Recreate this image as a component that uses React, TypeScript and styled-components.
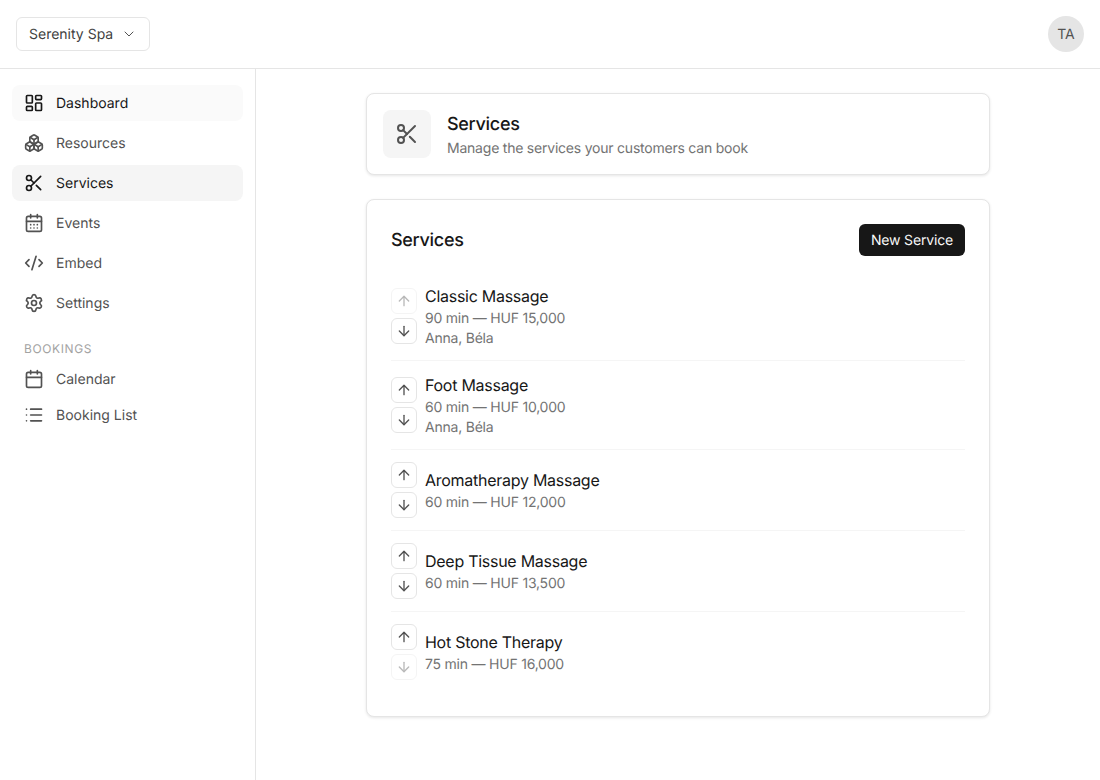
import React from "react";
import styled, { createGlobalStyle } from "styled-components";
import {
  ArrowDown,
  ArrowUp,
  Boxes,
  Calendar,
  CalendarDays,
  ChevronDown,
  CodeXml,
  LayoutDashboard,
  List,
  Scissors,
  Settings,
} from "lucide-react";

const Global = createGlobalStyle`
  html, body { margin: 0; padding: 0; background: #fff; }
  body { font-family: Inter, "Liberation Sans", sans-serif; color: #171717; -webkit-font-smoothing: antialiased; text-rendering: geometricPrecision; }
  button { text-rendering: geometricPrecision; }
  * { box-sizing: border-box; }
`;

const Page = styled.div`
  width: 1100px;
  height: 780px;
  display: flex;
  flex-direction: column;
  overflow: hidden;
`;

const Header = styled.header`
  height: 69px;
  flex: none;
  display: flex;
  align-items: center;
  justify-content: space-between;
  padding: 0 16px;
  border-bottom: 1px solid #e5e5e5;
`;

const OrgSelect = styled.button`
  height: 34px;
  width: 134px;
  display: flex;
  align-items: center;
  justify-content: space-between;
  padding: 0 12px;
  background: #fff;
  border: 1px solid #e5e5e5;
  border-radius: 6px;
  font: 400 14px/20px Inter, sans-serif;
  color: #404040;
  white-space: nowrap;
`;

const OrgName = styled.span`
  height: 20px;
  line-height: 22px;
`;

const Avatar = styled.div`
  width: 36px;
  height: 36px;
  border-radius: 50%;
  background: #e5e5e5;
  color: #525252;
  display: flex;
  align-items: center;
  justify-content: center;
  font-size: 14px;
`;

const Body = styled.div`
  flex: 1;
  display: flex;
  min-height: 0;
`;

const Sidebar = styled.aside`
  width: 256px;
  flex: none;
  padding: 16px 12px;
  border-right: 1px solid #e5e5e5;
`;

const NavGroup = styled.nav<{ $gap: number }>`
  display: flex;
  flex-direction: column;
  gap: ${(p) => p.$gap}px;
`;

const NavItem = styled.a<{ $bg?: string; $strong?: boolean }>`
  height: 36px;
  display: flex;
  align-items: center;
  gap: 12px;
  padding: 0 12px;
  border-radius: 8px;
  font-size: 14px;
  font-weight: ${(p) => (p.$strong ? 420 : 400)};
  color: ${(p) => (p.$strong ? "#171717" : "#525252")};
  background: ${(p) => p.$bg ?? "transparent"};
`;

const NavLabel = styled.span`
  height: 20px;
  line-height: 22px;
`;

const SectionLabel = styled.div`
  margin: 20px 0 4px;
  padding: 0 12px;
  font-size: 12px;
  line-height: 16px;
  font-weight: 400;
  letter-spacing: 0.6px;
  color: #a3a3a3;
  text-transform: uppercase;
`;

const Main = styled.main`
  flex: 1;
  padding: 24px 110px;
  display: flex;
  flex-direction: column;
  gap: 24px;
`;

const Card = styled.section`
  background: #fff;
  border: 1px solid #e5e5e5;
  border-radius: 8px;
  box-shadow: 0 1px 3px rgba(0, 0, 0, 0.1);
`;

const HeroCard = styled(Card)`
  padding: 16px;
  display: flex;
  align-items: center;
  gap: 16px;
`;

const HeroIcon = styled.div`
  width: 48px;
  height: 48px;
  border-radius: 8px;
  background: #f5f5f5;
  color: #525252;
  display: flex;
  align-items: center;
  justify-content: center;
`;

const HeroTitle = styled.h1`
  margin: 0;
  height: 28px;
  font-size: 18px;
  line-height: 30px;
  font-weight: 550;
  letter-spacing: -0.3px;
  color: #171717;
`;

const HeroText = styled.p`
  margin: 0;
  height: 20px;
  font-size: 14px;
  line-height: 22px;
  letter-spacing: -0.22px;
  color: #737373;
`;

const ListCard = styled(Card)`
  padding: 24px;
`;

const ListHead = styled.div`
  display: flex;
  align-items: center;
  justify-content: space-between;
  margin-bottom: 16px;
`;

const ListTitle = styled.h2`
  margin: 0;
  height: 28px;
  font-size: 18px;
  line-height: 30px;
  font-weight: 550;
  letter-spacing: -0.3px;
  color: #171717;
`;

const PrimaryButton = styled.button`
  height: 32px;
  padding: 1px 12px 0;
  border: 0;
  border-radius: 6px;
  background: #171717;
  color: #fafafa;
  font: 420 14px/20px Inter, sans-serif;
  letter-spacing: -0.17px;
`;

const Row = styled.div<{ $last?: boolean }>`
  display: flex;
  align-items: center;
  gap: 8px;
  padding: 12px 0;
  border-bottom: ${(p) => (p.$last ? "0" : "1px solid #f5f5f5")};
`;

const MoveColumn = styled.div`
  display: flex;
  flex-direction: column;
  gap: 4px;
`;

const MoveButton = styled.button<{ $off?: boolean }>`
  width: 26px;
  height: 26px;
  padding: 0;
  display: flex;
  align-items: center;
  justify-content: center;
  background: #fff;
  border: 1px solid #e5e5e5;
  border-radius: 6px;
  color: #525252;
  opacity: ${(p) => (p.$off ? 0.4 : 1)};
`;

const ServiceName = styled.div`
  font-size: 16px;
  line-height: 24px;
  font-weight: 410;
  letter-spacing: -0.27px;
  color: #171717;
`;

const ServiceMeta = styled.div`
  height: 20px;
  font-size: 14px;
  line-height: 22px;
  letter-spacing: -0.22px;
  color: #737373;
`;

const services = [
  { name: "Classic Massage", meta: "90 min — HUF 15,000", staff: "Anna, Béla" },
  { name: "Foot Massage", meta: "60 min — HUF 10,000", staff: "Anna, Béla" },
  { name: "Aromatherapy Massage", meta: "60 min — HUF 12,000" },
  { name: "Deep Tissue Massage", meta: "60 min — HUF 13,500" },
  { name: "Hot Stone Therapy", meta: "75 min — HUF 16,000" },
];

const mainNav = [
  { label: "Dashboard", Icon: LayoutDashboard, bg: "#fafafa", strong: true },
  { label: "Resources", Icon: Boxes },
  { label: "Services", Icon: Scissors, bg: "#f5f5f5", strong: true },
  { label: "Events", Icon: CalendarDays },
  { label: "Embed", Icon: CodeXml },
  { label: "Settings", Icon: Settings },
];

const bookingNav = [
  { label: "Calendar", Icon: Calendar },
  { label: "Booking List", Icon: List },
];

export default function App() {
  return (
    <Page>
      <Global />
      <Header>
        <OrgSelect>
          <OrgName>Serenity Spa</OrgName>
          <ChevronDown size={16} strokeWidth={1.5} color="#525252" />
        </OrgSelect>
        <Avatar>TA</Avatar>
      </Header>
      <Body>
        <Sidebar>
          <NavGroup $gap={4}>
            {mainNav.map(({ label, Icon, bg, strong }) => (
              <NavItem key={label} $bg={bg} $strong={strong}>
                <Icon size={20} strokeWidth={2} />
                <NavLabel>{label}</NavLabel>
              </NavItem>
            ))}
          </NavGroup>
          <SectionLabel>Bookings</SectionLabel>
          <NavGroup $gap={0}>
            {bookingNav.map(({ label, Icon }) => (
              <NavItem key={label}>
                <Icon size={20} strokeWidth={2} />
                <NavLabel>{label}</NavLabel>
              </NavItem>
            ))}
          </NavGroup>
        </Sidebar>
        <Main>
          <HeroCard>
            <HeroIcon>
              <Scissors size={24} strokeWidth={2} />
            </HeroIcon>
            <div>
              <HeroTitle>Services</HeroTitle>
              <HeroText>Manage the services your customers can book</HeroText>
            </div>
          </HeroCard>
          <ListCard>
            <ListHead>
              <ListTitle>Services</ListTitle>
              <PrimaryButton>New Service</PrimaryButton>
            </ListHead>
            {services.map((s, i) => (
              <Row key={s.name} $last={i === services.length - 1}>
                <MoveColumn>
                  <MoveButton $off={i === 0}>
                    <ArrowUp size={16} strokeWidth={2} />
                  </MoveButton>
                  <MoveButton $off={i === services.length - 1}>
                    <ArrowDown size={16} strokeWidth={2} />
                  </MoveButton>
                </MoveColumn>
                <div>
                  <ServiceName>{s.name}</ServiceName>
                  <ServiceMeta>{s.meta}</ServiceMeta>
                  {s.staff && <ServiceMeta>{s.staff}</ServiceMeta>}
                </div>
              </Row>
            ))}
          </ListCard>
        </Main>
      </Body>
    </Page>
  );
}
